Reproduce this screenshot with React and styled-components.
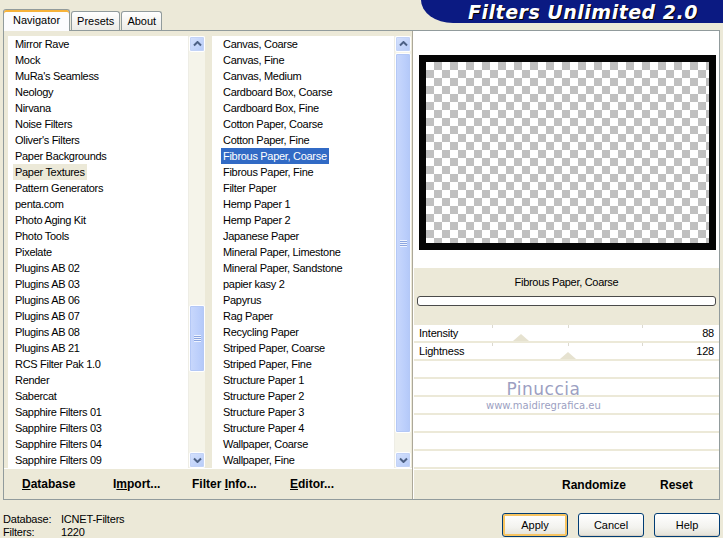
import React from 'react';
import styled, { createGlobalStyle } from 'styled-components';

const GlobalStyle = createGlobalStyle`
  html, body {
    margin: 0;
    padding: 0;
    background: #ece9d8;
  }
  body {
    font-family: "Liberation Sans", Arial, sans-serif;
    font-size: 11px;
    color: #000;
  }
`;

const Window = styled.div`
  position: relative;
  width: 723px;
  height: 538px;
  overflow: hidden;
  background: #ece9d8;
`;

const TopBar = styled.div`
  display: flex;
  justify-content: space-between;
  height: 30px;
`;

const Tabs = styled.div`
  display: flex;
  align-items: flex-end;
  gap: 1px;
  padding-left: 3px;
`;

const Tab = styled.div`
  position: relative;
  z-index: 1;
  box-sizing: border-box;
  height: ${p => (p.$active ? '22px' : '19px')};
  margin-bottom: ${p => (p.$active ? '-1px' : '0')};
  padding: ${p => (p.$active ? '3px 9px 0' : '2px 5px 0')};
  border: 1px solid #919b9c;
  border-bottom: none;
  border-radius: 3px 3px 0 0;
  background: ${p => (p.$active ? '#fcfcfe' : 'linear-gradient(#ffffff, #ecebe6)')};
  box-shadow: ${p => (p.$active ? 'inset 0 2px 0 #f7b33a' : 'none')};
  font-size: 11px;
  line-height: 15px;
  white-space: nowrap;
`;

const Banner = styled.div`
  width: 302px;
  height: 23px;
  background: #0b1a82;
  border-bottom-left-radius: 32px 23px;
  display: flex;
  align-items: center;
  justify-content: flex-end;
  padding-right: 25px;
  box-sizing: border-box;
`;

const BannerTitle = styled.span`
  color: #fff;
  font-family: "DejaVu Sans", "Liberation Sans", sans-serif;
  font-weight: bold;
  font-style: italic;
  font-size: 19px;
  line-height: 22px;
  letter-spacing: 0.5px;
  text-shadow: 1px 1px 0 #000;
`;

const Panel = styled.div`
  box-sizing: border-box;
  width: 717px;
  height: 470px;
  margin-left: 3px;
  border: 1px solid #919b9c;
  background: #ece9d8;
  display: flex;
`;

const LeftGroup = styled.div`
  width: 408px;
  display: flex;
  flex-direction: column;
  border-right: 1px solid #aca899;
`;

const ListsRow = styled.div`
  height: 437px;
  display: flex;
  gap: 7px;
  padding: 5px 0 0 4px;
  box-sizing: border-box;
`;

const ListBox = styled.div`
  width: ${p => p.$width}px;
  height: 432px;
  display: flex;
  background: #fff;
`;

const ListItems = styled.div`
  flex: 1;
  padding-left: ${p => p.$pad}px;
  display: flex;
  flex-direction: column;
  align-items: flex-start;
  overflow: hidden;
`;

const Item = styled.div`
  height: 16px;
  line-height: 16px;
  padding: 0 2px;
  white-space: nowrap;
  letter-spacing: -0.3px;
  background: ${p => (p.$sel === 'active' ? '#316ac5' : p.$sel === 'inactive' ? '#ece9d8' : 'transparent')};
  color: ${p => (p.$sel === 'active' ? '#fff' : '#000')};
`;

const ScrollBar = styled.div`
  width: 17px;
  height: 100%;
  display: flex;
  flex-direction: column;
  background: #f5f4ea;
  border-left: 1px solid #eeede5;
  box-sizing: border-box;
`;

const ScrollButton = styled.div`
  width: 16px;
  height: 16px;
  box-sizing: border-box;
  border: 1px solid #fff;
  border-radius: 2px;
  background: linear-gradient(135deg, #d6e2fd, #b6cbf8);
  box-shadow: 0 0 0 1px #c3d3f7 inset;
  display: flex;
  align-items: center;
  justify-content: center;
`;

const Track = styled.div`
  flex: 1;
  display: flex;
  flex-direction: column;
`;

const Thumb = styled.div`
  box-sizing: border-box;
  width: 16px;
  border: 1px solid #fff;
  border-radius: 2px;
  background: linear-gradient(90deg, #c9d8fc, #bccffb 60%, #b3c8f8);
  box-shadow: 0 0 0 1px #b4c8f6 inset;
  display: flex;
  align-items: center;
  justify-content: center;
`;

const Grip = styled.div`
  width: 7px;
  height: 7px;
  background: repeating-linear-gradient(#eef3fe 0 1px, #8ca6e0 1px 2px);
`;

const ButtonBar = styled.div`
  height: 30px;
  display: grid;
  grid-template-columns: ${p => p.$cols};
  align-items: center;
  padding-left: ${p => p.$pad}px;
  border-top: 1px solid #fff;
  box-sizing: border-box;
`;

const BarButton = styled.div`
  font-size: 12px;
  font-weight: bold;
  white-space: nowrap;
  u {
    text-decoration: underline;
  }
`;

const RightGroup = styled.div`
  flex: 1;
  display: flex;
  flex-direction: column;
  border-left: 1px solid #fff;
`;

const Preview = styled.div`
  height: 237px;
  box-sizing: border-box;
  background: #fff;
  padding: 24px 3px 0 5px;
`;

const Frame = styled.div`
  height: 195px;
  box-sizing: border-box;
  border: 7px solid #050505;
  background: repeating-conic-gradient(#c0c0c0 0% 25%, #fff 0% 50%) 0 0 / 16px 16px;
`;

const NameSection = styled.div`
  height: 57px;
  box-sizing: border-box;
  padding: 7px 3px 0 3px;
  text-align: center;
`;

const FilterName = styled.div`
  line-height: 14px;
  letter-spacing: -0.3px;
`;

const Progress = styled.div`
  height: 10px;
  margin-top: 7px;
  box-sizing: border-box;
  border: 1px solid #4a4a4a;
  border-radius: 3px;
  background: #fff;
`;

const Sliders = styled.div`
  display: flex;
  flex-direction: column;
`;

const SliderRow = styled.div`
  position: relative;
  height: 16px;
  margin-bottom: 2px;
  background: #fff;
  display: flex;
  justify-content: space-between;
  align-items: center;
  padding: 0 5px 0 5px;
  font-size: 11px;
  letter-spacing: -0.2px;
`;

const Tick = styled.div`
  position: absolute;
  top: 0;
  width: 1px;
  height: 3px;
  background: #dcdad0;
`;

const Pointer = styled.div`
  position: absolute;
  bottom: 0;
  width: 0;
  height: 0;
  margin-left: -8px;
  border-left: 8px solid transparent;
  border-right: 8px solid transparent;
  border-bottom: 7px solid #e6e2d0;
`;

const Label = styled.span`
  position: relative;
`;

const StatusArea = styled.div`
  height: 38px;
  display: flex;
  justify-content: space-between;
`;

const StatusGrid = styled.div`
  padding: 13px 0 0 3px;
  display: grid;
  grid-template-columns: 58px auto;
  line-height: 12px;
  font-size: 11px;
  letter-spacing: -0.2px;
`;

const DialogButtons = styled.div`
  display: flex;
  gap: 10px;
  padding-top: 13px;
  margin-right: 3px;
`;

const DialogButton = styled.div`
  width: 66px;
  height: 24px;
  box-sizing: border-box;
  border: 1px solid #003c74;
  border-radius: 3px;
  background: linear-gradient(#ffffff, #f3f3ef 60%, #e3e1d6);
  box-shadow: ${p => (p.$default ? 'inset 0 0 0 2px #f7c461' : 'inset 0 -1px 0 #d6d0c5')};
  display: flex;
  align-items: center;
  justify-content: center;
  font-size: 11px;
`;

const Watermark = styled.div`
  position: absolute;
  left: 486px;
  top: 380px;
  text-align: center;
  color: #9c9fc2;
  text-shadow: 0 0 2px #fff;
  pointer-events: none;
`;

const WatermarkName = styled.div`
  font-family: "DejaVu Sans", sans-serif;
  font-size: 17px;
  line-height: 19px;
  letter-spacing: 0.5px;
`;

const WatermarkUrl = styled.div`
  font-family: "DejaVu Sans", sans-serif;
  font-size: 10px;
  line-height: 12px;
  margin-top: 1px;
`;

const leftItems = [
  'Mirror Rave', 'Mock', "MuRa's Seamless", 'Neology', 'Nirvana', 'Noise Filters',
  "Oliver's Filters", 'Paper Backgrounds', 'Paper Textures', 'Pattern Generators',
  'penta.com', 'Photo Aging Kit', 'Photo Tools', 'Pixelate', 'Plugins AB 02',
  'Plugins AB 03', 'Plugins AB 06', 'Plugins AB 07', 'Plugins AB 08', 'Plugins AB 21',
  'RCS Filter Pak 1.0', 'Render', 'Sabercat', 'Sapphire Filters 01',
  'Sapphire Filters 03', 'Sapphire Filters 04', 'Sapphire Filters 09',
];

const midItems = [
  'Canvas, Coarse', 'Canvas, Fine', 'Canvas, Medium', 'Cardboard Box, Coarse',
  'Cardboard Box, Fine', 'Cotton Paper, Coarse', 'Cotton Paper, Fine',
  'Fibrous Paper, Coarse', 'Fibrous Paper, Fine', 'Filter Paper', 'Hemp Paper 1',
  'Hemp Paper 2', 'Japanese Paper', 'Mineral Paper, Limestone',
  'Mineral Paper, Sandstone', 'papier kasy 2', 'Papyrus', 'Rag Paper',
  'Recycling Paper', 'Striped Paper, Coarse', 'Striped Paper, Fine',
  'Structure Paper 1', 'Structure Paper 2', 'Structure Paper 3', 'Structure Paper 4',
  'Wallpaper, Coarse', 'Wallpaper, Fine',
];

const sliders = [
  { name: 'Intensity', value: 88 },
  { name: 'Lightness', value: 128 },
];

const Chevron = ({ down }) => (
  <svg width="9" height="6" viewBox="0 0 9 6">
    <path
      d={down ? 'M1 1.5 L4.5 5 L8 1.5' : 'M1 4.5 L4.5 1 L8 4.5'}
      fill="none"
      stroke="#4d6185"
      strokeWidth="2"
    />
  </svg>
);

const Scroller = ({ before, size }) => (
  <ScrollBar>
    <ScrollButton><Chevron /></ScrollButton>
    <Track>
      <div style={{ height: before }} />
      <Thumb style={{ height: size }}><Grip /></Thumb>
    </Track>
    <ScrollButton><Chevron down /></ScrollButton>
  </ScrollBar>
);

// slider track runs 300px, values 0..255
const toX = v => 3 + (v * 300) / 255;

export default function App() {
  return (
    <Window>
      <GlobalStyle />
      <TopBar>
        <Tabs>
          <Tab $active>Navigator</Tab>
          <Tab>Presets</Tab>
          <Tab>About</Tab>
        </Tabs>
        <Banner>
          <BannerTitle>Filters Unlimited 2.0</BannerTitle>
        </Banner>
      </TopBar>

      <Panel>
        <LeftGroup>
          <ListsRow>
            <ListBox $width={197}>
              <ListItems $pad={5}>
                {leftItems.map(t => (
                  <Item key={t} $sel={t === 'Paper Textures' ? 'inactive' : ''}>{t}</Item>
                ))}
              </ListItems>
              <Scroller before={253} size={67} />
            </ListBox>
            <ListBox $width={199}>
              <ListItems $pad={9}>
                {midItems.map(t => (
                  <Item key={t} $sel={t === 'Fibrous Paper, Coarse' ? 'active' : ''}>{t}</Item>
                ))}
              </ListItems>
              <Scroller before={1} size={380} />
            </ListBox>
          </ListsRow>
          <ButtonBar $pad={18} $cols="91px 79px 98px auto">
            <BarButton><u>D</u>atabase</BarButton>
            <BarButton>I<u>m</u>port...</BarButton>
            <BarButton>Filter <u>I</u>nfo...</BarButton>
            <BarButton><u>E</u>ditor...</BarButton>
          </ButtonBar>
        </LeftGroup>

        <RightGroup>
          <Preview>
            <Frame />
          </Preview>
          <NameSection>
            <FilterName>Fibrous Paper, Coarse</FilterName>
            <Progress />
          </NameSection>
          <Sliders>
            {[0, 1, 2, 3, 4, 5, 6, 7].map(i => {
              const s = sliders[i];
              return (
                <SliderRow key={i}>
                  {s && (
                    <>
                      <Tick style={{ left: toX(64) }} />
                      <Tick style={{ left: toX(128) }} />
                      <Tick style={{ left: toX(191) }} />
                      <Pointer style={{ left: toX(s.value) }} />
                      <Label>{s.name}</Label>
                      <Label>{s.value}</Label>
                    </>
                  )}
                </SliderRow>
              );
            })}
          </Sliders>
          <ButtonBar $pad={148} $cols="98px auto">
            <BarButton>Randomize</BarButton>
            <BarButton>Reset</BarButton>
          </ButtonBar>
        </RightGroup>
      </Panel>

      <StatusArea>
        <StatusGrid>
          <span>Database:</span>
          <span>ICNET-Filters</span>
          <span>Filters:</span>
          <span>1220</span>
        </StatusGrid>
        <DialogButtons>
          <DialogButton $default>Apply</DialogButton>
          <DialogButton>Cancel</DialogButton>
          <DialogButton>Help</DialogButton>
        </DialogButtons>
      </StatusArea>

      <Watermark>
        <WatermarkName>Pinuccia</WatermarkName>
        <WatermarkUrl>www.maidiregrafica.eu</WatermarkUrl>
      </Watermark>
    </Window>
  );
}
